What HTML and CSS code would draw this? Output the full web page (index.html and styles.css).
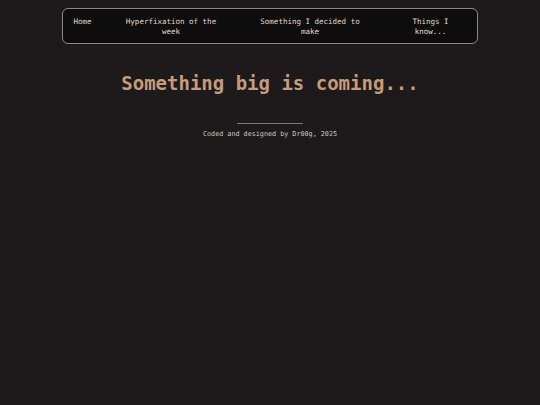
FILE: index.html
```html
<!DOCTYPE html>
<html>
<head>
<meta charset="utf-8">
<link rel="stylesheet" href="styles.css">
</head>
<body>
<nav class="nav">
  <a class="nav-item nav-home" href="#">Home</a>
  <a class="nav-item nav-hyper" href="#">Hyperfixation of the week</a>
  <a class="nav-item nav-make" href="#">Something I decided to make</a>
  <a class="nav-item nav-know" href="#">Things I know...</a>
</nav>
<main class="main">
  <h1 class="title">Something big is coming...</h1>
  <footer class="footer">
    <div class="rule"></div>
    <p class="credit">Coded and designed by Dr00g, 2025</p>
  </footer>
</main>
</body>
</html>
```
FILE: styles.css
```css
html, body {
  margin: 0;
  padding: 0;
  background: #1c1a1b;
  height: 100%;
}
body {
  font-family: "DejaVu Sans Mono", monospace;
  color: #e4d6c6;
}
.nav {
  box-sizing: border-box;
  width: 416px;
  margin: 8px auto 0 auto;
  border: 1px solid #8c8782;
  border-radius: 6px;
  background: #0e0d0d;
  display: grid;
  grid-template-columns: 39px 138px 144px 93px;
  align-items: start;
  padding: 8px 0 6px 0;
}
.nav-item {
  color: #e4d6c6;
  text-decoration: none;
  font-size: 7.5px;
  line-height: 10px;
  text-align: center;
}
.nav-hyper { padding: 0 19px; }
.nav-make { padding: 0 19px 0 15px; }
.nav-know { padding: 0 23px; }
.main {
  text-align: center;
}
.title {
  margin: 28px 0 0 0;
  font-size: 19px;
  line-height: 22px;
  font-weight: bold;
  color: #c59b7c;
}
.footer {
  margin-top: 29px;
  display: flex;
  flex-direction: column;
  align-items: center;
}
.rule {
  width: 66px;
  height: 1px;
  background: #85766a;
}
.credit {
  margin: 6px 0 0 0;
  font-size: 6.75px;
  line-height: 9px;
  color: #d2c8bd;
}
```
